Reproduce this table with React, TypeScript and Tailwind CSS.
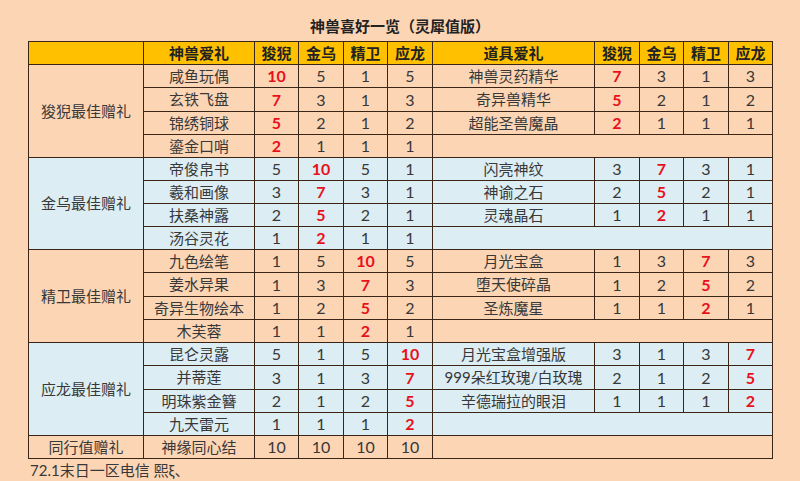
import React from "react";

type Cell = number | string;
type Row = { gift: string; vals: Cell[]; hi: number; item?: { name: string; vals: Cell[]; hi: number } };
type Group = { label: string; blue: boolean; rows: Row[] };

const groups: Group[] = [
  {
    label: "狻猊最佳赠礼",
    blue: false,
    rows: [
      { gift: "咸鱼玩偶", vals: [10, 5, 1, 5], hi: 0, item: { name: "神兽灵药精华", vals: [7, 3, 1, 3], hi: 0 } },
      { gift: "玄铁飞盘", vals: [7, 3, 1, 3], hi: 0, item: { name: "奇异兽精华", vals: [5, 2, 1, 2], hi: 0 } },
      { gift: "锦绣铜球", vals: [5, 2, 1, 2], hi: 0, item: { name: "超能圣兽魔晶", vals: [2, 1, 1, 1], hi: 0 } },
      { gift: "鎏金口哨", vals: [2, 1, 1, 1], hi: 0 },
    ],
  },
  {
    label: "金乌最佳赠礼",
    blue: true,
    rows: [
      { gift: "帝俊帛书", vals: [5, 10, 5, 1], hi: 1, item: { name: "闪亮神纹", vals: [3, 7, 3, 1], hi: 1 } },
      { gift: "羲和画像", vals: [3, 7, 3, 1], hi: 1, item: { name: "神谕之石", vals: [2, 5, 2, 1], hi: 1 } },
      { gift: "扶桑神露", vals: [2, 5, 2, 1], hi: 1, item: { name: "灵魂晶石", vals: [1, 2, 1, 1], hi: 1 } },
      { gift: "汤谷灵花", vals: [1, 2, 1, 1], hi: 1 },
    ],
  },
  {
    label: "精卫最佳赠礼",
    blue: false,
    rows: [
      { gift: "九色绘笔", vals: [1, 5, 10, 5], hi: 2, item: { name: "月光宝盒", vals: [1, 3, 7, 3], hi: 2 } },
      { gift: "姜水异果", vals: [1, 3, 7, 3], hi: 2, item: { name: "堕天使碎晶", vals: [1, 2, 5, 2], hi: 2 } },
      { gift: "奇异生物绘本", vals: [1, 2, 5, 2], hi: 2, item: { name: "圣炼魔星", vals: [1, 1, 2, 1], hi: 2 } },
      { gift: "木芙蓉", vals: [1, 1, 2, 1], hi: 2 },
    ],
  },
  {
    label: "应龙最佳赠礼",
    blue: true,
    rows: [
      { gift: "昆仑灵露", vals: [5, 1, 5, 10], hi: 3, item: { name: "月光宝盒增强版", vals: [3, 1, 3, 7], hi: 3 } },
      { gift: "并蒂莲", vals: [3, 1, 3, 7], hi: 3, item: { name: "999朵红玫瑰/白玫瑰", vals: [2, 1, 2, 5], hi: 3 } },
      { gift: "明珠紫金簪", vals: [2, 1, 2, 5], hi: 3, item: { name: "辛德瑞拉的眼泪", vals: [1, 1, 1, 2], hi: 3 } },
      { gift: "九天雷元", vals: [1, 1, 1, 2], hi: 3 },
    ],
  },
];

const beasts = ["狻猊", "金乌", "精卫", "应龙"];
const td = "border border-[#3b2516] text-center p-0 leading-none whitespace-nowrap";

function Nums({ vals, hi }: { vals: Cell[]; hi: number }) {
  return (
    <>
      {vals.map((v, i) => (
        <td key={i} className={`${td} text-[16px] ${i === hi ? "text-[#e8101a] font-bold" : ""}`}>
          {v}
        </td>
      ))}
    </>
  );
}

export default function App() {
  return (
    <div
      className="w-[800px] h-[481px] bg-[#fcd5b5] text-[#383838] text-[15px] overflow-hidden"
      style={{ fontFamily: '"Lato", "Noto Sans CJK SC", sans-serif' }}
    >
      <div className="h-[41px] flex items-end justify-center pb-[4px] text-[15px] font-bold text-[#222]">
        神兽喜好一览（灵犀值版）
      </div>
      <table className="ml-[28px] border-collapse table-fixed w-[744px]">
        <colgroup>
          <col className="w-[115px]" />
          <col className="w-[111px]" />
          <col className="w-[44px]" />
          <col className="w-[45px]" />
          <col className="w-[44px]" />
          <col className="w-[45px]" />
          <col className="w-[162px]" />
          <col className="w-[45px]" />
          <col className="w-[44px]" />
          <col className="w-[45px]" />
          <col className="w-[44px]" />
        </colgroup>
        <tbody>
          <tr className="h-[23px] bg-[#ffc000] font-bold text-[#222]">
            <td className={td}></td>
            <td className={td}>神兽爱礼</td>
            {beasts.map((b) => (
              <td key={"a" + b} className={td}>{b}</td>
            ))}
            <td className={td}>道具爱礼</td>
            {beasts.map((b) => (
              <td key={"b" + b} className={td}>{b}</td>
            ))}
          </tr>
          {groups.map((g, gi) =>
            g.rows.map((r, ri) => (
              <tr
                key={r.gift}
                className={`${ri === 1 && gi !== 1 ? "h-[24px]" : "h-[23px]"} ${g.blue ? "bg-[#dcedf3]" : ""}`}
              >
                {ri === 0 && (
                  <td rowSpan={4} className={td}>
                    {g.label}
                  </td>
                )}
                <td className={td}>{r.gift}</td>
                <Nums vals={r.vals} hi={r.hi} />
                {r.item ? (
                  <>
                    <td className={td}>{r.item.name}</td>
                    <Nums vals={r.item.vals} hi={r.item.hi} />
                  </>
                ) : (
                  <td colSpan={5} className={td}></td>
                )}
              </tr>
            ))
          )}
          <tr className="h-[23px]">
            <td className={td}>同行值赠礼</td>
            <td className={td}>神缘同心结</td>
            <Nums vals={[10, 10, 10, 10]} hi={-1} />
            <td colSpan={5} className={td}></td>
          </tr>
        </tbody>
      </table>
      <div className="pl-[30px] pt-[2px] leading-[18px]">72.1末日一区电信 熙ξ、</div>
    </div>
  );
}
